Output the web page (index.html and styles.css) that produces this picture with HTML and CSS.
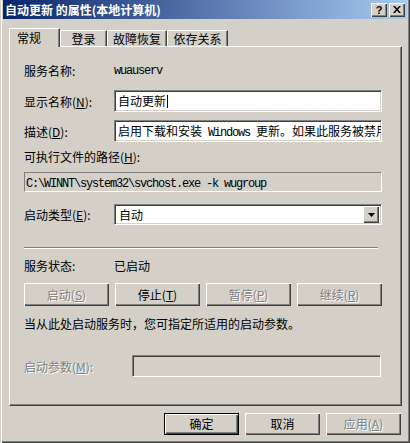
FILE: index.html
```html
<!DOCTYPE html>
<html lang="zh-CN">
<head>
<meta charset="utf-8">
<title>自动更新 的属性(本地计算机)</title>
<link rel="stylesheet" href="styles.css">
</head>
<body>
<div class="window">
  <div class="titlebar">
    <span class="title">自动更新 的属性(本地计算机)</span>
    <div class="tbtns">
      <span class="tbtn help">?</span>
      <span class="tbtn close"><svg width="8" height="7" viewBox="0 0 8 7"><path d="M0 0h2l2 2.5L6 0h2L5 3.5 8 7H6L4 4.5 2 7H0l3-3.5z" fill="#000"/></svg></span>
    </div>
  </div>
  <div class="tabs">
    <div class="tab active">常规</div>
    <div class="tab t2">登录</div>
    <div class="tab t3">故障恢复</div>
    <div class="tab t4">依存关系</div>
  </div>
  <div class="panel">
    <div class="row r1"><span>服务名称:</span><span class="mono">wuauserv</span></div>
    <div class="row r2"><span>显示名称(<u>N</u>):</span><div class="edit">自动更新<span class="caret"></span></div></div>
    <div class="row r3"><span>描述(<u>D</u>):</span><div class="edit">启用下载和安装<span class="mono"> Windows </span>更新。如果此服务被禁用</div></div>
    <div class="line r4">可执行文件的路径(<u>H</u>):</div>
    <div class="pathbox r5"><span class="mono">C:\WINNT\system32\svchost.exe -k wugroup</span></div>
    <div class="row r6"><span>启动类型(<u>E</u>):</span>
      <div class="combo"><span class="cval">自动</span><span class="dd"><svg width="7" height="4" viewBox="0 0 7 4"><path d="M0 0h7L3.5 4z" fill="#000"/></svg></span></div>
    </div>
    <div class="sep"></div>
    <div class="row r7"><span>服务状态:</span><span>已启动</span></div>
    <div class="btnrow">
      <span class="btn dis">启动(<u>S</u>)</span>
      <span class="btn">停止(<u>T</u>)</span>
      <span class="btn dis">暂停(<u>P</u>)</span>
      <span class="btn dis">继续(<u>R</u>)</span>
    </div>
    <div class="line r9">当从此处启动服务时，您可指定所适用的启动参数。</div>
    <div class="row rp"><span class="distext">启动参数(<u>M</u>):</span><div class="edit disabled"></div></div>
  </div>
  <div class="footer">
    <span class="btn def">确定</span>
    <span class="btn">取消</span>
    <span class="btn dis">应用(<u>A</u>)</span>
  </div>
</div>
</body>
</html>
```
FILE: styles.css
```css
html, body {
  margin: 0;
  padding: 0;
  background: #D4D0C8;
}
body {
  font-family: "Noto Sans CJK SC", "Liberation Sans", sans-serif;
  font-size: 12px;
  color: #000;
}
.window {
  width: 410px;
  height: 443px;
  box-sizing: border-box;
  padding: 0 3px 3px 3px;
  background: #D4D0C8;
  box-shadow: inset 1px 0 #D4D0C8, inset 2px 0 #fff, inset -1px -1px #404040, inset -2px -2px #808080;
  display: flex;
  flex-direction: column;
}
.titlebar {
  height: 19px;
  display: flex;
  align-items: center;
  padding-left: 2px;
  background: linear-gradient(to right, #0A246A, #A6CAF0);
  color: #fff;
  font-weight: bold;
  font-size: 12px;
  line-height: 19px;
}
.title { white-space: nowrap; }
.tbtns {
  margin-left: auto;
  display: flex;
  gap: 2px;
  padding-right: 2px;
}
.tbtn {
  width: 16px;
  height: 14px;
  box-sizing: border-box;
  background: #D4D0C8;
  box-shadow: inset 1px 1px #fff, inset -1px -1px #404040, inset -2px -2px #808080;
  display: flex;
  align-items: center;
  justify-content: center;
  color: #000;
  font-family: "Liberation Sans", sans-serif;
  font-weight: bold;
  font-size: 11px;
  line-height: 14px;
}
.tbtn svg { display: block; margin-top: -1px; }
.tabs {
  display: flex;
  align-items: flex-end;
  height: 18px;
  margin: 9px 0 0 6px;
  position: relative;
  z-index: 1;
}
.tab {
  box-sizing: border-box;
  height: 16px;
  border-top: 1px solid #fff;
  border-left: 1px solid #fff;
  border-right: 1px solid #404040;
  box-shadow: inset -1px 0 #808080;
  background: #D4D0C8;
  display: flex;
  align-items: center;
  justify-content: center;
  line-height: 15px;
  white-space: nowrap;
}
.tab.active {
  width: 51px;
  height: 19px;
  margin-bottom: -1px;
  padding-bottom: 1px;
  justify-content: flex-start;
  padding-left: 7px;
}
.t2 { width: 47px; }
.t3 { width: 60px; }
.t4 { width: 61px; }
.panel {
  width: 393px;
  height: 360px;
  margin-left: 6px;
  box-sizing: border-box;
  border: 1px solid;
  border-color: #fff #404040 #404040 #fff;
  box-shadow: inset -1px -1px #808080;
  padding: 0 0 0 14px;
  display: flex;
  flex-direction: column;
}
.row {
  display: grid;
  grid-template-columns: 90px 268px;
  align-items: center;
  white-space: nowrap;
}
.line {
  height: 16px;
  line-height: 16px;
  white-space: nowrap;
}
.r1 { margin-top: 15px; height: 16px; }
.r2 { margin-top: 12px; height: 22px; }
.r3 { margin-top: 8px; height: 22px; }
.r4 { margin-top: 7px; }
.r5 { margin-top: 7px; }
.r6 { margin-top: 12px; height: 21px; }
.r7 { margin-top: 8px; height: 16px; }
.r9 { margin-top: 10px; }
.rp { margin-top: 23px; height: 22px; grid-template-columns: 108px 249px; }
.mono {
  font-family: "Liberation Mono", monospace;
  font-size: 12px;
  letter-spacing: -1.2px;
}
u { text-decoration: underline; text-underline-offset: 1px; }
.edit {
  display: block;
  height: 22px;
  box-sizing: border-box;
  border: 1px solid;
  border-color: #808080 #fff #fff #808080;
  box-shadow: inset 1px 1px #404040, inset -1px -1px #D4D0C8;
  background: #fff;
  padding: 0 3px;
  line-height: 20px;
  overflow: hidden;
  white-space: pre;
}
.edit.disabled { background: #D4D0C8; }
.caret {
  display: inline-block;
  width: 1px;
  height: 13px;
  background: #000;
  margin-left: 1px;
  vertical-align: -2px;
}
.pathbox {
  width: 358px;
  height: 20px;
  box-sizing: border-box;
  border: 1px solid;
  border-color: #808080 #fff #fff #808080;
  padding-left: 1px;
  line-height: 18px;
  white-space: nowrap;
  overflow: hidden;
}
.combo {
  height: 21px;
  box-sizing: border-box;
  border: 1px solid;
  border-color: #808080 #fff #fff #808080;
  box-shadow: inset 1px 1px #404040, inset -1px -1px #D4D0C8;
  background: #fff;
  display: flex;
  align-items: center;
  padding: 2px 2px 2px 4px;
}
.cval { flex: 1; line-height: 17px; }
.dd {
  width: 16px;
  height: 17px;
  box-sizing: border-box;
  background: #D4D0C8;
  box-shadow: inset 1px 1px #fff, inset -1px -1px #404040, inset -2px -2px #808080;
  display: flex;
  align-items: center;
  justify-content: center;
}
.dd svg { display: block; }
.sep {
  width: 354px;
  margin-top: 22px;
  border-top: 1px solid #808080;
  border-bottom: 1px solid #fff;
  height: 0;
}
.btnrow {
  margin-top: 10px;
  width: 358px;
  display: grid;
  grid-template-columns: repeat(4, 1fr);
  gap: 6px;
}
.btn {
  height: 23px;
  box-sizing: border-box;
  background: #D4D0C8;
  box-shadow: inset 1px 1px #fff, inset -1px -1px #404040, inset -2px -2px #808080;
  display: flex;
  align-items: center;
  justify-content: center;
  white-space: nowrap;
  line-height: 16px;
}
.btn.dis, .distext {
  color: #808080;
  text-shadow: 1px 1px #fff;
}
.footer {
  display: flex;
  justify-content: flex-end;
  gap: 6px;
  margin-top: 7px;
  padding-right: 6px;
}
.footer .btn {
  width: 75px;
  height: 22px;
}
.footer .btn.def {
  border: 1px solid #000;
}
```
